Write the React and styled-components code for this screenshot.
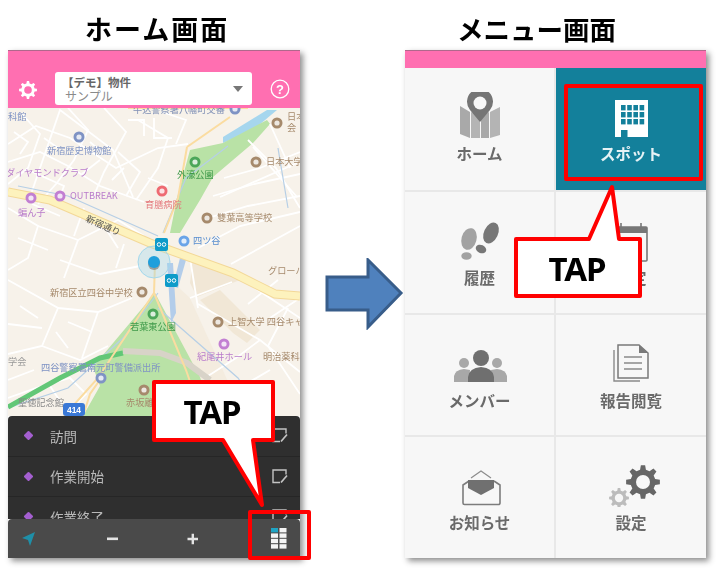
import React from "react";
import styled, { createGlobalStyle } from "styled-components";

const GlobalStyle = createGlobalStyle`
  html, body {
    margin: 0;
    padding: 0;
    background: #fff;
  }
  body {
    font-family: "Noto Sans CJK JP", "Noto Sans", sans-serif;
  }
`;

const Page = styled.div`
  display: flex;
  width: 721px;
  height: 575px;
  overflow: hidden;
  padding-left: 8px;
  box-sizing: border-box;
  filter: blur(0.3px);
`;

const Column = styled.section`
  display: flex;
  flex-direction: column;
  width: ${(p) => p.$width}px;
  flex: none;
`;

const Title = styled.h1`
  margin: 0;
  height: 50px;
  box-sizing: border-box;
  padding-left: ${(p) => p.$indent}px;
  font-size: ${(p) => p.$size}px;
  line-height: 58px;
  font-weight: 700;
  letter-spacing: ${(p) => p.$spacing}px;
  color: #000;
  white-space: nowrap;
`;

const Phone = styled.div`
  position: relative;
  display: flex;
  flex-direction: column;
  height: 508px;
  box-shadow: 3px 3px 6px rgba(0, 0, 0, 0.45);
`;

const PinkHeader = styled.header`
  flex: none;
  height: ${(p) => p.$height}px;
  box-sizing: border-box;
  background: #ff6fb1;
  border-top: 1px solid #b0688c;
  display: flex;
  align-items: flex-end;
  padding: 0 11px 3px 11px;
`;

const HeaderIcon = styled.svg`
  flex: none;
  margin-bottom: 6px;
`;

const SelectBox = styled.div`
  position: relative;
  flex: none;
  width: 197px;
  height: 33px;
  margin: 0 18px 0 18px;
  box-sizing: border-box;
  background: #fff;
  border-radius: 3px;
  padding: 4px 0 0 9px;
`;

const SelectName = styled.div`
  font-size: 11.5px;
  line-height: 13px;
  font-weight: 700;
  color: #666;
  margin-left: -2px;
`;

const SelectSub = styled.div`
  font-size: 12px;
  line-height: 13px;
  color: #8a8a8a;
  margin-left: 1px;
`;

const Caret = styled.span`
  position: absolute;
  right: 9px;
  top: 14px;
  border-left: 5px solid transparent;
  border-right: 5px solid transparent;
  border-top: 6px solid #777;
`;

const MapView = styled.svg`
  display: block;
  flex: 1;
  width: 292px;
  min-height: 0;
`;

const Sheet = styled.div`
  flex: none;
  height: 103px;
  overflow: hidden;
  background: #2f2f2f;
  border-radius: 4px 4px 0 0;
`;

const SheetRow = styled.div`
  display: flex;
  align-items: center;
  height: 40.5px;
  box-sizing: border-box;
  padding: 0 12px 0 17px;
  border-bottom: 1px solid #262626;
`;

const Diamond = styled.i`
  width: 7px;
  height: 7px;
  margin-right: 18px;
  background: #a45fd0;
  transform: rotate(45deg);
  border-radius: 1px;
`;

const SheetLabel = styled.span`
  flex: 1;
  font-size: 13.5px;
  color: #b9b9b9;
`;

const BottomBar = styled.nav`
  flex: none;
  height: 39px;
  display: flex;
  align-items: center;
  padding-left: 13px;
  background: #4a4a4a;
  border-radius: 4px 4px 0 0;
`;

const BarSlot = styled.div`
  display: flex;
  width: 16px;
  justify-content: center;
  margin-left: ${(p) => p.$gap}px;
`;

const Spacer = styled.div`
  flex: none;
  width: 105px;
`;

const ArrowIcon = styled.svg`
  display: block;
  margin: 258px 0 0 25px;
`;

const MenuGrid = styled.div`
  flex: 1;
  display: grid;
  grid-template-columns: 151px 150px;
  grid-template-rows: 124px 123px 122px 1fr;
  min-height: 0;
`;

const MenuCell = styled.div`
  display: flex;
  flex-direction: column;
  align-items: center;
  box-sizing: border-box;
  padding-top: 24px;
  background: ${(p) => (p.$active ? "#13809b" : "#f7f7f7")};
  border-right: ${(p) => (p.$right ? "none" : "2px solid #e8e8e8")};
  border-bottom: ${(p) => (p.$last ? "none" : "2px solid #e8e8e8")};
`;

const MenuIcon = styled.svg`
  display: block;
  flex: none;
`;

const MenuLabel = styled.span`
  margin-top: 6px;
  font-size: 15.5px;
  line-height: 18px;
  font-weight: 700;
  color: ${(p) => (p.$active ? "#e6f2f5" : "#6a6a6a")};
`;

const RedFrame = styled.div`
  position: absolute;
  left: ${(p) => p.$left}px;
  top: ${(p) => p.$top}px;
  width: ${(p) => p.$w}px;
  height: ${(p) => p.$h}px;
  box-sizing: border-box;
  border: 4px solid #f00;
  border-radius: 2px;
`;

const CalloutLayer = styled.svg`
  position: absolute;
  left: 0;
  top: 0;
  width: 100%;
  height: 100%;
  overflow: visible;
`;

const TapText = styled.text`
  font-family: "Noto Sans", sans-serif;
  font-size: 33px;
  font-weight: 700;
  letter-spacing: -1px;
  fill: #000;
  text-anchor: middle;
`;

const MapText = styled.text`
  font-family: "Noto Sans CJK JP", sans-serif;
  font-size: 9.2px;
  fill: ${(p) => p.$color};
`;

const BROWN = "#a68a6c";
const BLUE = "#7f93c4";
const PURPLE = "#b97ccb";
const GREEN = "#3f9a4a";

const labels = [
  ["牛込警察署八幡町交番", 125, 5, "#7f8fb5"],
  ["科館", 0, 12, BLUE],
  ["新宿歴史博物館", 39, 46, BLUE],
  ["ダイヤモンドクラブ", -2, 68, PURPLE],
  ["OUTBREAK", 62, 91, PURPLE],
  ["蝙ん子", 10, 108, PURPLE],
  ["外濠公園", 169, 70, GREEN],
  ["日本", 279, 12, BROWN],
  ["会", 279, 23, BROWN],
  ["日本大学", 258, 57, BROWN],
  ["育膳病院", 137, 100, "#e4787c"],
  ["雙葉高等学校", 209, 113, BROWN],
  ["四ツ谷", 185, 136, "#5a8fd0"],
  ["グローバ", 260, 166, BROWN],
  ["新宿区立四谷中学校", 42, 188, BROWN],
  ["若葉東公園", 122, 222, GREEN],
  ["上智大学 四谷キャ", 220, 217, BROWN],
  ["紀尾井ホール", 189, 252, PURPLE],
  ["明治薬科", 255, 252, BROWN],
  ["学会", 0, 257, "#999"],
  ["四谷警察署南元町警備派出所", 33, 263, BLUE],
  ["赤坂離", 118, 298, BROWN],
  ["聖徳記念館", 10, 298, "#888"],
];

const pins = [
  [227, 1, "#7f93c4"],
  [71, 29, "#7f93c4"],
  [269, 15, BROWN],
  [248, 54, BROWN],
  [187, 54, "#4ca65a"],
  [52, 88, "#c27fd2"],
  [23, 90, "#c27fd2"],
  [154, 83, "#ee6a72"],
  [199, 110, BROWN],
  [176, 133, "#6aa4e8"],
  [134, 184, BROWN],
  [145, 206, "#4ca65a"],
  [210, 214, BROWN],
  [216, 236, "#c27fd2"],
  [93, 270, "#7f93c4"],
  [136, 282, BROWN],
];

const whiteRoads = [
  "M0 36 L28 18 L62 30 L108 60 L150 40 L180 36",
  "M14 6 L32 26 L20 60 L0 76",
  "M22 89 L52 2 L105 42 L125 89",
  "M60 0 L80 22 L66 52 L48 76 L30 96",
  "M96 0 L118 24 L96 64 L84 92",
  "M130 12 L160 30 L150 60 L128 92",
  "M154 4 L178 12 L168 36",
  "M0 54 L32 44 L60 58 L92 78 L136 94",
  "M20 62 L56 78 L48 100",
  "M110 44 L132 64 L118 88",
  "M120 12 L136 12 L136 28 M146 10 L146 30 L164 30",
  "M82 34 L96 46 M36 30 L50 40 M6 24 L20 34 L12 46",
  "M74 66 L92 52 M104 72 L116 60 M140 70 L160 78",
  "M212 89 L289 55",
  "M245 39 L289 89",
  "M216 70 L252 60 L292 44",
  "M205 88 L246 76 L292 66",
  "M240 32 L268 60 L292 100",
  "M200 110 L240 98 L292 88",
  "M190 140 L232 118 L292 104",
  "M223 156 L292 118",
  "M262 16 L282 60",
  "M0 100 L30 118 L20 150 L0 162",
  "M30 118 L70 132 L56 170",
  "M70 132 L110 112 L136 128",
  "M52 152 L92 166 L132 158",
  "M10 130 L40 142 M24 96 L52 108 M76 100 L66 128",
  "M96 118 L110 140 M116 136 L108 160",
  "M0 172 L50 200 L34 238 L0 246",
  "M50 200 L90 204 L124 190",
  "M34 238 L72 252 L100 238",
  "M0 216 L34 220",
  "M90 204 L74 250",
  "M12 198 L30 210 M60 214 L84 224 M48 224 L60 240",
  "M190 196 L252 232 L292 264",
  "M232 170 L292 210",
  "M190 200 L182 150",
  "M182 190 L224 174",
  "M252 232 L228 250 L200 268",
  "M280 200 L260 238 L292 286",
  "M214 290 L262 262",
  "M240 196 L270 172 M262 210 L292 190",
  "M0 290 L28 280 L62 270 L78 286 L64 300",
  "M0 272 L26 262 M42 278 L54 296",
];

const thinYellowRoads = [
  "M120 0 L240 0",
  "M179 39 L222 9",
  "M179 39 L170 90 L156 125",
  "M147 155 L146 185",
  "M146 185 L90 270 L56 308",
  "M146 185 L178 262 L194 308",
  "M75 308 L82 286 L96 266",
];

const blueLines = [
  "M155 125 L178 70 L220 38",
  "M150 185 L115 230 L60 280 L0 300",
  "M150 200 L230 270 L250 300",
  "M270 40 L280 100",
  "M10 78 L60 88 L150 128",
];

const gearPath = (cx, cy, outer, inner, teeth) => {
  const step = (Math.PI * 2) / teeth;
  const points = [];
  for (let i = 0; i < teeth; i += 1) {
    const a = i * step;
    const w = step * 0.2;
    points.push([cx + inner * Math.cos(a - w * 1.5), cy + inner * Math.sin(a - w * 1.5)]);
    points.push([cx + outer * Math.cos(a - w * 0.8), cy + outer * Math.sin(a - w * 0.8)]);
    points.push([cx + outer * Math.cos(a + w * 0.8), cy + outer * Math.sin(a + w * 0.8)]);
    points.push([cx + inner * Math.cos(a + w * 1.5), cy + inner * Math.sin(a + w * 1.5)]);
  }
  return "M" + points.map((p) => p[0].toFixed(2) + " " + p[1].toFixed(2)).join(" L") + " Z";
};

const CityMap = () => (
  <MapView viewBox="0 0 292 308">
    <rect width="292" height="308" fill="#f7f2ea" />
    <polygon points="185,149 232,172 189,189 182,175" fill="#f1e7d6" />
    <polygon points="192,192 212,182 252,222 239,235 225,225" fill="#f1e7d6" />
    <polygon points="160,170 182,190 232,300 210,308 192,308 170,250" fill="#f4ecdf" />
    <polygon points="259,2 215,29 215,35 245,22 269,2" fill="#a6d6ee" />
    <polygon points="259,12 215,35 182,42 169,90 162,125 172,125 192,92 205,69 245,35 262,16" fill="#b9e2a6" />
    <polygon points="147,185 85,259 92,278 75,308 205,308 192,269" fill="#b9e2a6" />
    {whiteRoads.map((d) => (
      <path key={d} d={d} stroke="#fff" strokeWidth="1.8" fill="none" />
    ))}
    {blueLines.map((d) => (
      <path key={d} d={d} stroke="#b6cfe6" strokeWidth="1.2" fill="none" />
    ))}
    <path d="M0 299 L52 270 L92 250 L115 245" stroke="#62c777" strokeWidth="5" fill="none" />
    <path d="M115 243 L152 245 L179 255 L202 272" stroke="#d8d3c8" strokeWidth="6" fill="none" />
    <path d="M206 276 L222 290" stroke="#62c777" strokeWidth="7" fill="none" />
    <path d="M212 285 L235 308" stroke="#a6d6ee" strokeWidth="9" fill="none" />
    <polygon points="159,155 165,155 168,205 163,215" fill="#b3cdea" />
    <polygon points="172,150 178,152 170,180 165,178" fill="#b3cdea" />
    <path d="M0 84 L42 92 L142 135 L225 165 L267 186 L292 188" stroke="#f3d898" strokeWidth="9" fill="none" />
    <path d="M0 84 L42 92 L142 135 L225 165 L267 186 L292 188" stroke="#fdf2bd" strokeWidth="7" fill="none" />
    {thinYellowRoads.map((d) => (
      <path key={d} d={d} stroke="#fbdca0" strokeWidth="2" fill="none" />
    ))}
    {pins.map(([x, y, c]) => (
      <g key={x + "-" + y}>
        <circle cx={x} cy={y} r="5.5" fill={c} />
        <circle cx={x} cy={y} r="2.6" fill="#fff" fillOpacity="0.8" />
      </g>
    ))}
    {labels.map(([t, x, y, c]) => (
      <MapText key={t} x={x} y={y} $color={c}>
        {t}
      </MapText>
    ))}
    <MapText x="77" y="113" $color="#555" transform="rotate(24 77 113)">
      新宿通り
    </MapText>
    <circle cx="146" cy="154" r="16" fill="#9ad6ee" fillOpacity="0.35" stroke="#a4d8ec" />
    <circle cx="146" cy="156" r="6" fill="#666" fillOpacity="0.55" />
    <circle cx="146" cy="154" r="6" fill="#1f9fdc" />
    <rect x="147" y="130" width="13" height="13" rx="2" fill="#0e9bc9" />
    <rect x="157" y="166" width="13" height="13" rx="2" fill="#0e9bc9" />
    <circle cx="151" cy="136.5" r="1.8" fill="none" stroke="#fff" />
    <circle cx="156" cy="136.5" r="1.8" fill="none" stroke="#fff" />
    <circle cx="161" cy="172.5" r="1.8" fill="none" stroke="#fff" />
    <circle cx="166" cy="172.5" r="1.8" fill="none" stroke="#fff" />
    <rect x="55" y="295" width="22" height="13" rx="3" fill="#3a78d6" />
    <text x="66" y="305" fontSize="8.5" fontWeight="700" fill="#fff" textAnchor="middle" fontFamily="Liberation Sans, sans-serif">
      414
    </text>
  </MapView>
);

const EditIcon = () => (
  <svg width="16" height="15" viewBox="0 0 16 15">
    <path d="M14 5.5 V1 H1 V13.5 H8" fill="none" stroke="#c4c4c4" strokeWidth="1.4" />
    <path d="M9 13.5 L15 6.5" stroke="#c4c4c4" strokeWidth="1.7" />
  </svg>
);

const LocateIcon = () => (
  <svg width="16" height="16" viewBox="0 0 16 16">
    <polygon points="14,1 1,7 7,9 9,15" fill="#1f8fa8" />
  </svg>
);

const MinusIcon = () => (
  <svg width="12" height="4" viewBox="0 0 12 4">
    <rect y="0.5" width="11" height="2.6" fill="#e4e4e4" />
  </svg>
);

const PlusIcon = () => (
  <svg width="12" height="12" viewBox="0 0 12 12">
    <path d="M0.5 6 H11 M5.8 0.8 V11.2" stroke="#e4e4e4" strokeWidth="2.4" />
  </svg>
);

const GridIcon = () => (
  <svg width="16" height="21" viewBox="0 0 16 21">
    {[0, 1, 2, 3].map((row) =>
      [0, 1].map((col) => (
        <rect
          key={row + "-" + col}
          x={col * 8.5}
          y={row * 5.4}
          width="7"
          height="4.4"
          fill={row === 0 && col === 0 ? "#1fa4c4" : "#f4f4f4"}
        />
      ))
    )}
  </svg>
);

const HomeMapIcon = () => (
  <MenuIcon width="60" height="46" viewBox="0 0 60 46">
    <polygon points="10,14 20,20 20,46 10,42" fill="#a9a9a9" />
    <polygon points="21,20 30,24 30,46 21,46" fill="#b4b4b4" />
    <polygon points="31,24 39,20 39,46 31,46" fill="#a9a9a9" />
    <polygon points="40,20 50,15 50,43 40,46" fill="#b4b4b4" />
    <path d="M30 30 L20 18 A13 13 0 1 1 40 18 Z" fill="#757575" />
    <circle cx="30" cy="11" r="6.5" fill="#f7f7f7" />
  </MenuIcon>
);

const BuildingIcon = () => (
  <MenuIcon width="60" height="46" viewBox="0 0 60 46">
    <rect x="14" y="8" width="33" height="37" fill="#fff" />
    {[0, 1, 2].map((row) =>
      [0, 1, 2, 3].map((col) => (
        <rect
          key={row + "-" + col}
          x={20 + col * 6.2}
          y={13 + row * 7}
          width="4.6"
          height="5.4"
          fill="#13809b"
        />
      ))
    )}
    <rect x="20" y="38" width="6.5" height="7" fill="#13809b" />
  </MenuIcon>
);

const FootprintIcon = () => (
  <MenuIcon width="60" height="46" viewBox="0 0 60 46">
    <ellipse cx="19" cy="23" rx="7.5" ry="11" transform="rotate(15 19 23)" fill="#a2a2a2" />
    <ellipse cx="16.5" cy="40" rx="5.2" ry="3.8" fill="#a2a2a2" />
    <ellipse cx="41" cy="17" rx="7" ry="11" transform="rotate(25 41 17)" fill="#777" />
    <ellipse cx="31" cy="33" rx="5.5" ry="4" transform="rotate(25 31 33)" fill="#777" />
  </MenuIcon>
);

const CalendarIcon = () => (
  <MenuIcon width="60" height="46" viewBox="0 0 60 46">
    <rect x="14" y="11" width="32" height="34" rx="1" fill="#f7f7f7" stroke="#777" strokeWidth="1.6" />
    <rect x="14" y="11" width="32" height="6" fill="#777" />
    <path d="M20 7 V14 M40 7 V14" stroke="#777" strokeWidth="1.6" />
  </MenuIcon>
);

const PeopleIcon = () => (
  <MenuIcon width="60" height="46" viewBox="0 0 60 46">
    <circle cx="14" cy="24" r="5" fill="#a8a8a8" />
    <circle cx="47" cy="24" r="5" fill="#a8a8a8" />
    <path d="M4 43 V37 Q5 31 14 30 L20 31 L19 43 Z" fill="#a8a8a8" />
    <path d="M57 43 V37 Q56 31 47 30 L41 31 L42 43 Z" fill="#a8a8a8" />
    <circle cx="31" cy="19" r="8" fill="#6f6f6f" />
    <path d="M18 43 V38 Q19 29 31 28 Q43 29 44 38 V43 Z" fill="#6f6f6f" />
  </MenuIcon>
);

const DocumentIcon = () => (
  <MenuIcon width="60" height="46" viewBox="0 0 60 46">
    <path d="M13 11 V42 H39" fill="none" stroke="#8a8a8a" strokeWidth="1.4" />
    <path d="M17 6 H38 L47 14 V39 H17 Z" fill="#f7f7f7" stroke="#7a7a7a" strokeWidth="1.5" />
    <path d="M38 6 V14 H47 Z" fill="#7a7a7a" />
    <path d="M23 18 H41 M23 24 H41 M23 30 H41" stroke="#8a8a8a" strokeWidth="1.6" />
  </MenuIcon>
);

const MailIcon = () => (
  <MenuIcon width="60" height="46" viewBox="0 0 60 46">
    <path d="M19 20 L13 24 V42 A1.5 1.5 0 0 0 14.5 43.5 H48.5 A1.5 1.5 0 0 0 50 42 V24 L44 20" fill="none" stroke="#7c7c7c" strokeWidth="1.6" />
    <path d="M21 17 L31 10 L41 17" fill="none" stroke="#8c8c8c" strokeWidth="1.2" />
    <polygon points="18,19 44,19 44,27 31,34 18,27" fill="#707070" />
  </MenuIcon>
);

const GearsIcon = () => (
  <MenuIcon width="60" height="46" viewBox="0 0 60 46">
    <path d={gearPath(42, 21, 17, 12.5, 8)} fill="#666" />
    <circle cx="42" cy="21" r="7" fill="#f7f7f7" />
    <path d={gearPath(18, 37, 10, 7.5, 8)} fill="#bcbcbc" />
    <circle cx="18" cy="37" r="4.2" fill="#f7f7f7" />
  </MenuIcon>
);

const sheetItems = ["訪問", "作業開始", "作業終了"];

const menuItems = [
  { label: "ホーム", icon: <HomeMapIcon /> },
  { label: "スポット", icon: <BuildingIcon />, active: true },
  { label: "履歴", icon: <FootprintIcon /> },
  { label: "予定", icon: <CalendarIcon /> },
  { label: "メンバー", icon: <PeopleIcon /> },
  { label: "報告閲覧", icon: <DocumentIcon /> },
  { label: "お知らせ", icon: <MailIcon /> },
  { label: "設定", icon: <GearsIcon /> },
];

const Callout = ({ points, textX, textY }) => (
  <CalloutLayer>
    <polygon points={points} fill="#fff" stroke="#f00" strokeWidth="4" strokeLinejoin="round" />
    <TapText x={textX} y={textY}>
      TAP
    </TapText>
  </CalloutLayer>
);

export default function App() {
  return (
    <Page>
      <GlobalStyle />
      <Column $width={292}>
        <Title $indent={77} $spacing={2} $size={27}>
          ホーム画面
        </Title>
        <Phone>
          <PinkHeader $height={58}>
            <HeaderIcon width="18" height="18" viewBox="0 0 18 18">
              <path d={gearPath(9, 9, 9, 6.8, 8)} fill="#fff" />
              <circle cx="9" cy="9" r="3.8" fill="#ff6fb1" />
            </HeaderIcon>
            <SelectBox>
              <SelectName>【デモ】物件</SelectName>
              <SelectSub>サンプル</SelectSub>
              <Caret />
            </SelectBox>
            <HeaderIcon width="20" height="20" viewBox="0 0 20 20">
              <circle cx="10" cy="10" r="8.8" fill="none" stroke="#fff" strokeWidth="1.3" />
              <text x="10" y="14.5" fontSize="13" fontWeight="700" fill="#fff" textAnchor="middle" fontFamily="Liberation Sans, sans-serif">
                ?
              </text>
            </HeaderIcon>
          </PinkHeader>
          <CityMap />
          <Sheet>
            {sheetItems.map((item) => (
              <SheetRow key={item}>
                <Diamond />
                <SheetLabel>{item}</SheetLabel>
                <EditIcon />
              </SheetRow>
            ))}
          </Sheet>
          <BottomBar>
            <BarSlot $gap={0}>
              <LocateIcon />
            </BarSlot>
            <BarSlot $gap={68}>
              <MinusIcon />
            </BarSlot>
            <BarSlot $gap={64}>
              <PlusIcon />
            </BarSlot>
            <BarSlot $gap={70}>
              <GridIcon />
            </BarSlot>
          </BottomBar>
          <Callout points="146,332 265,332 265,390 245,390 254,455 215,390 146,390" textX={204} textY={374} />
          <RedFrame $left={240} $top={460} $w={63} $h={50} />
        </Phone>
      </Column>
      <Spacer>
        <ArrowIcon width="80" height="72" viewBox="0 0 80 72">
          <polygon points="2,19 43,19 43,2 76,35 43,69 43,52 2,52" fill="#4f81bd" stroke="#385d8a" strokeWidth="3" />
        </ArrowIcon>
      </Spacer>
      <Column $width={301}>
        <Title $indent={52} $spacing={0} $size={26.5}>
          メニュー画面
        </Title>
        <Phone>
          <PinkHeader $height={18} />
          <MenuGrid>
            {menuItems.map((item, i) => (
              <MenuCell key={item.label} $active={item.active} $right={i % 2 === 1} $last={i >= 6}>
                {item.icon}
                <MenuLabel $active={item.active}>{item.label}</MenuLabel>
              </MenuCell>
            ))}
          </MenuGrid>
          <RedFrame $left={159} $top={34} $w={139} $h={97} />
          <Callout points="111,189 184,189 207,137 214,189 235,189 235,246 111,246" textX={172} textY={231} />
        </Phone>
      </Column>
    </Page>
  );
}
